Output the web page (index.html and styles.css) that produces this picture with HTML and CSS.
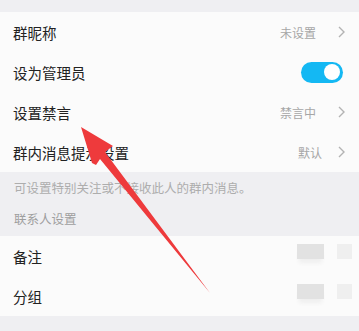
FILE: index.html
```html
<!DOCTYPE html>
<html lang="zh">
<head>
    <meta charset="UTF-8">
    <meta name="viewport" content="width=device-width, initial-scale=1.0">
    <title>群成员设置</title>
    <link rel="stylesheet" href="styles.css">
</head>
<body>
    <div class="top-band"></div>

    <section class="group">
        <div class="row">
            <span class="label">群昵称</span>
            <span class="value">未设置</span>
            <svg class="chevron" viewBox="0 0 7 12"><polyline points="1 1 6 6 1 11"></polyline></svg>
        </div>
        <div class="row">
            <span class="label">设为管理员</span>
            <span class="switch on"><span class="knob"></span></span>
        </div>
        <div class="row">
            <span class="label">设置禁言</span>
            <span class="value">禁言中</span>
            <svg class="chevron" viewBox="0 0 7 12"><polyline points="1 1 6 6 1 11"></polyline></svg>
        </div>
        <div class="row">
            <span class="label">群内消息提示设置</span>
            <span class="value value-short">默认</span>
            <svg class="chevron" viewBox="0 0 7 12"><polyline points="1 1 6 6 1 11"></polyline></svg>
        </div>
    </section>

    <div class="hint">可设置特别关注或不接收此人的群内消息。</div>
    <div class="section-title">联系人设置</div>

    <section class="group">
        <div class="row">
            <span class="label">备注</span>
            <span class="blur"><span class="blk dark"></span><span class="blk light"></span></span>
        </div>
        <div class="row">
            <span class="label">分组</span>
            <span class="blur"><span class="blk dark"></span><span class="blk light"></span></span>
        </div>
    </section>

    <!-- 标注箭头 -->
    <svg class="arrow" viewBox="0 0 359 331">
        <polygon points="81,127 113,146 105,152 108,156 210,293 100,159 96,165 92,163"></polygon>
    </svg>
</body>
</html>
```

FILE: styles.css
```css
*{margin:0;padding:0;box-sizing:border-box}
body{font-family:"Noto Sans CJK SC","Noto Sans",sans-serif;background:#efeff2;color:#222;width:359px;height:331px;overflow:hidden;position:relative}

.top-band{height:12px}

.group{background:#fbfbfb}
.row{height:40px;display:flex;align-items:center;padding:0 14px 0 13px}
.label{font-size:14.5px;flex:1}
.value{font-size:12px;color:#a6a6a6;margin-right:22px}
.value-short{margin-right:16px}
.chevron{width:7px;height:12px;fill:none;stroke:#b3b3b3;stroke-width:1.4}

.switch{width:42px;height:21px;border-radius:11px;background:#e0e0e0;display:flex;align-items:center;padding:0 3px;margin-right:2px}
.switch.on{background:#14b8f3;justify-content:flex-end}
.knob{width:16px;height:16px;border-radius:50%;background:#fff}

.hint{height:28px;display:flex;align-items:center;padding:2px 14px 0;font-size:12.5px;color:#adadad}
.section-title{height:36px;display:flex;align-items:center;padding:0 14px;font-size:12.5px;color:#9e9e9e}

.blur{display:flex;gap:13px;margin-right:-7px;margin-bottom:10px}
.blk{height:15px;display:block}
.blk.dark{width:27px;background:#e2e2e2;box-shadow:0 6px 4px -2px #efefef}
.blk.light{width:15px;background:#efefef}

.arrow{position:absolute;left:0;top:0;width:359px;height:331px;pointer-events:none}
.arrow polygon{fill:#ee3a3c}
```
